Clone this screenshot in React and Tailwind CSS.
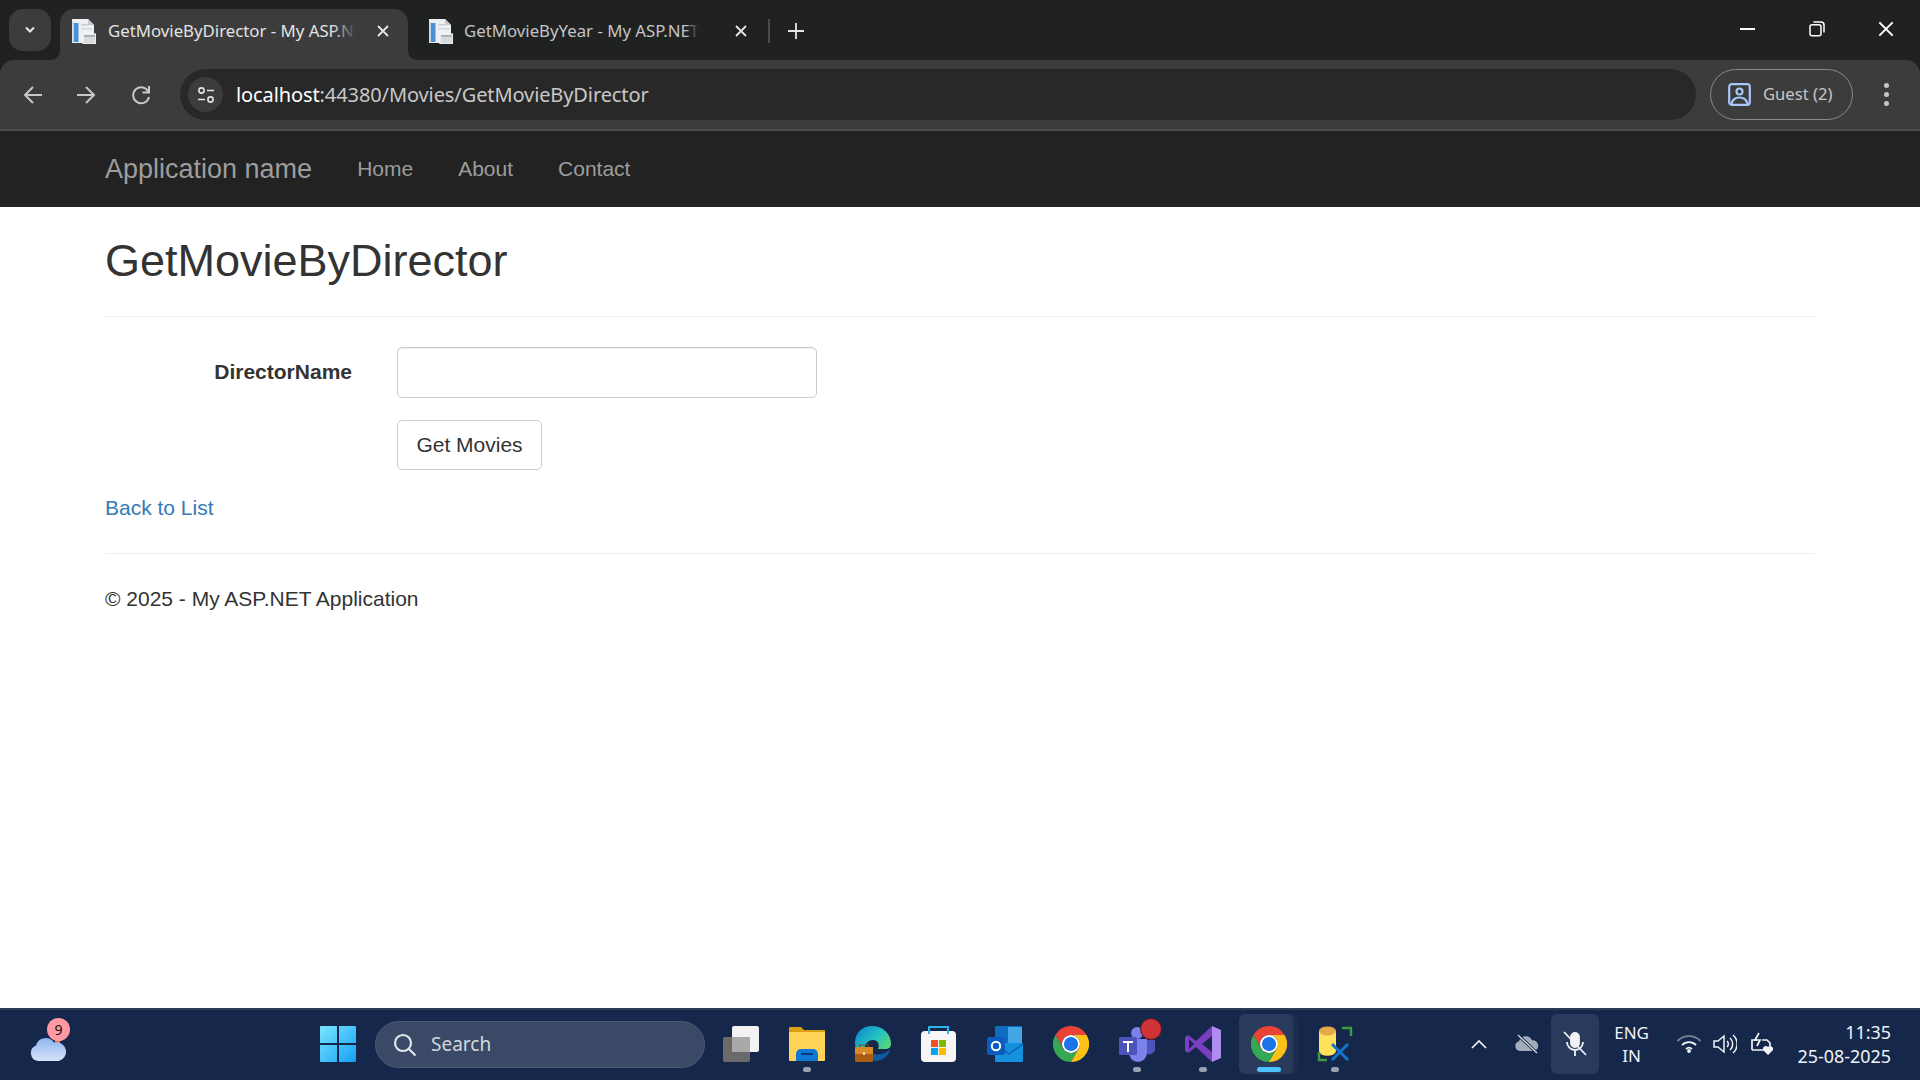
import React from "react";

const ui = "font-['Noto_Sans','Open_Sans',sans-serif]";
const web = "font-['Liberation_Sans',Arial,sans-serif]";

function DocIcon() {
  return (
    <svg width="24" height="26" viewBox="0 0 24 26" className="shrink-0">
      <path d="M0 1h16l6 6v18H0z" fill="#eef1f4" />
      <path d="M16 1l6 6h-6z" fill="#c4c9cf" />
      <rect x="1.5" y="5" width="5" height="19" fill="#4a90d4" />
      <rect x="0" y="3" width="1.5" height="22" fill="#cfe0f0" />
      <rect x="9" y="6" width="7" height="1.5" fill="#c9cdd2" />
      <rect x="9" y="10" width="11" height="1.5" fill="#d3d6da" />
      <rect x="11" y="16" width="13" height="10" fill="#d7dade" stroke="#f6f6f6" strokeWidth="1.2" />
      <rect x="12" y="17" width="11" height="2" fill="#aeb3ba" />
    </svg>
  );
}

function X({ size = 12, w = 1.8, color = "#e6e6e6" }) {
  return (
    <svg width={size} height={size} viewBox="0 0 12 12">
      <path d="M1 1l10 10M11 1L1 11" stroke={color} strokeWidth={w} fill="none" />
    </svg>
  );
}

function Corner({ flip }) {
  return (
    <svg width="10" height="10" viewBox="0 0 10 10" className={flip ? "absolute bottom-0 left-[-10px] -scale-x-100" : "absolute bottom-0 right-[-10px]"}>
      <path d="M0 0C0 6 4 10 10 10H0z" fill="#3c3c3c" />
    </svg>
  );
}

function TabStrip() {
  return (
    <div className={`${ui} h-[60px] bg-[#202222] flex items-start pt-[9px] pl-[9px] shrink-0`}>
      <div className="w-[42px] h-[42px] rounded-[14px] bg-[#3c3c3c] flex items-center justify-center">
        <svg width="12" height="8" viewBox="0 0 12 8"><path d="M2 1.5l4 4 4-4" stroke="#e8e8e8" strokeWidth="2" fill="none" /></svg>
      </div>
      <div className="relative ml-[9px] w-[348px] h-[51px] bg-[#3c3c3c] rounded-t-[14px] flex items-center pl-[12px] pb-[8px]">
        <Corner flip />
        <Corner />
        <DocIcon />
        <div className="relative ml-[12px] w-[248px] overflow-hidden whitespace-nowrap text-[16.8px] leading-[22px] text-[#e3e3e3]">
          GetMovieByDirector - My ASP.NET Application
          <div className="absolute right-0 top-0 h-full w-[24px] bg-gradient-to-r from-transparent to-[#3c3c3c]" />
        </div>
        <div className="ml-[21px]"><X /></div>
      </div>
      <div className="ml-[21px] h-[43px] flex items-center">
        <DocIcon />
        <div className="relative ml-[11px] w-[246px] overflow-hidden whitespace-nowrap text-[16.8px] leading-[22px] text-[#c2c4c4]">
          GetMovieByYear - My ASP.NET Application
          <div className="absolute right-0 top-0 h-full w-[24px] bg-gradient-to-r from-transparent via-[#202222] to-[#202222]" />
        </div>
        <div className="ml-[25px]"><X /></div>
        <div className="ml-[21px] w-[2px] h-[24px] bg-[#4a4c4c]" />
        <div className="ml-[18px]">
          <svg width="16" height="16" viewBox="0 0 16 16"><path d="M8 0v16M0 8h16" stroke="#e6e6e6" strokeWidth="1.8" /></svg>
        </div>
      </div>
      <div className="flex-1" />
      <div className="flex items-center h-[40px]">
        <div className="w-[69px] flex justify-center"><div className="w-[15px] h-[2px] bg-white" /></div>
        <div className="w-[69px] flex justify-center">
          <svg width="16" height="16" viewBox="0 0 16 16" fill="none" stroke="#fff" strokeWidth="1.5">
            <rect x="1" y="3.8" width="11" height="11" rx="2" />
            <path d="M4.5 1h7.5a3 3 0 0 1 3 3v7.5" />
          </svg>
        </div>
        <div className="w-[69px] flex justify-center"><X size={16} w={1.5} color="#fff" /></div>
      </div>
    </div>
  );
}

function Toolbar() {
  return (
    <div className="bg-[#202222] shrink-0">
      <div className={`${ui} h-[71px] bg-[#3c3c3c] rounded-t-[14px] border-b-[2px] border-[#4b4b4b] flex items-start pt-[9px] pl-[22px]`}>
        <div className="h-[51px] flex items-center">
          <svg width="22" height="22" viewBox="0 0 22 22" fill="none" stroke="#c7c7c7" strokeWidth="2"><path d="M20 11H3M11 3l-8 8 8 8" /></svg>
          <svg width="22" height="22" viewBox="0 0 22 22" fill="none" stroke="#c7c7c7" strokeWidth="2" className="ml-[31px]"><path d="M2 11h17M11 3l8 8-8 8" /></svg>
          <svg width="20" height="22" viewBox="0 0 20 22" fill="none" stroke="#c7c7c7" strokeWidth="2" className="ml-[34px]"><path d="M17.5 8A8 8 0 1 0 18 13" /><path d="M18 2v6.5h-6.5" /></svg>
        </div>
        <div className="ml-[29px] w-[1516px] h-[51px] rounded-full bg-[#282828] flex items-center pl-[8px]">
          <div className="w-[35px] h-[35px] rounded-full bg-[#3c3c3c] flex items-center justify-center">
            <svg width="18" height="18" viewBox="0 0 18 18" fill="none" stroke="#e3e3e3" strokeWidth="1.6">
              <circle cx="4.5" cy="4.5" r="2.6" /><path d="M10 4.5h7M1 13.5h7" /><circle cx="13.5" cy="13.5" r="2.6" />
            </svg>
          </div>
          <div className="ml-[13px] text-[20px] leading-[26px] whitespace-nowrap tracking-[-0.1px] text-[#c8c8c8]">
            <span className="text-white">localhost</span>:44380/Movies/GetMovieByDirector
          </div>
        </div>
        <div className="ml-[14px] w-[143px] h-[51px] rounded-full border-[1.5px] border-[#8a8a8a] flex items-center pl-[17px]">
          <svg width="23" height="23" viewBox="0 0 23 23" fill="none" stroke="#a8c7fa" strokeWidth="2.2">
            <rect x="1.2" y="1.2" width="20.6" height="20.6" rx="2.5" />
            <circle cx="11.5" cy="8.5" r="3" />
            <path d="M3.5 21c1-5 4-6.5 8-6.5s7 1.5 8 6.5" />
          </svg>
          <span className="ml-[12px] text-[16.6px] whitespace-nowrap text-[#c7c7c7]">Guest (2)</span>
        </div>
        <div className="h-[51px] ml-[31px] flex flex-col items-center justify-center gap-[4.5px]">
          <div className="w-[4.5px] h-[4.5px] rounded-full bg-[#c7c7c7]" />
          <div className="w-[4.5px] h-[4.5px] rounded-full bg-[#c7c7c7]" />
          <div className="w-[4.5px] h-[4.5px] rounded-full bg-[#c7c7c7]" />
        </div>
      </div>
    </div>
  );
}

function Chrome() {
  return (
    <svg width="36" height="36" viewBox="0 0 48 48">
      <path d="M44.8 12A24 24 0 0 0 3.2 12L13.6 30A12 12 0 0 1 24 12z" fill="#ea4335" />
      <path d="M3.2 12A24 24 0 0 0 24 48L34.4 30A12 12 0 0 1 13.6 30z" fill="#34a853" />
      <path d="M24 48A24 24 0 0 0 44.8 12H24A12 12 0 0 1 34.4 30z" fill="#fbc116" />
      <circle cx="24" cy="24" r="12" fill="#fff" />
      <circle cx="24" cy="24" r="9.4" fill="#1a73e8" />
    </svg>
  );
}

function Slot({ children, dot, active }) {
  return (
    <div className="relative w-[66px] h-[60px] flex items-center justify-center">
      {active && <div className="absolute left-[3px] top-0 w-[54px] h-[60px] rounded-[6px] bg-[#2a3a5c] shadow-[5px_0_0_#1f2e4e]" />}
      <div className="relative">{children}</div>
      {dot && <div className="absolute bottom-[2px] left-1/2 -ml-[4px] w-[8px] h-[5px] rounded-full bg-[#9aa2b1]" />}
      {active && <div className="absolute bottom-[2px] left-[21px] w-[24px] h-[5px] rounded-full bg-[#4cc2ff]" />}
    </div>
  );
}

function Taskbar() {
  return (
    <div className={`${ui} h-[72px] shrink-0 bg-[#15274a] border-t-[2px] border-[#2f3c58] flex items-start pt-[4px]`}>
      <div className="relative w-[320px] h-[60px] shrink-0 flex items-center pl-[30px]">
        <svg width="36" height="24" viewBox="0 0 36 24" className="mt-[10px]">
          <defs>
            <linearGradient id="c1" x1="0" y1="0" x2="0" y2="1"><stop offset="0" stopColor="#8fb4ee" /><stop offset="1" stopColor="#d7e4fa" /></linearGradient>
          </defs>
          <rect x="25" y="0" width="5" height="6" fill="#e8752a" />
          <path d="M8 24a8 8 0 0 1-2-15.4 10 10 0 0 1 18-3A8.5 8.5 0 0 1 29 24z" fill="url(#c1)" />
        </svg>
        <div className="absolute left-[47px] top-[4px] w-[23px] h-[23px] rounded-full bg-[#ff9aa2] text-[#111] text-[14px] leading-[23px] text-center">9</div>
      </div>
      <div className="w-[55px] h-[60px] shrink-0 flex items-center">
        <svg width="36" height="36" viewBox="0 0 36 36">
          <defs>
            <linearGradient id="w1" x1="0" y1="0" x2="1" y2="1"><stop offset="0" stopColor="#7ae6ff" /><stop offset="1" stopColor="#14a0f5" /></linearGradient>
          </defs>
          <path d="M1 0h16v17H0V1a1 1 0 0 1 1-1zM19 0h16a1 1 0 0 1 1 1v16H19zM0 19h17v17H1a1 1 0 0 1-1-1zM19 19h17v16a1 1 0 0 1-1 1H19z" fill="url(#w1)" />
        </svg>
      </div>
      <div className="w-[330px] h-[47px] mt-[7px] shrink-0 rounded-full bg-[#3a4966] border border-[#4a5874] flex items-center pl-[17px]">
        <svg width="24" height="24" viewBox="0 0 24 24" fill="none" stroke="#e3e6ec" strokeWidth="2.2">
          <circle cx="10" cy="10" r="8" /><path d="M16 16l6.5 6.5" />
        </svg>
        <span className="ml-[14px] text-[19px] text-[#d3d7df]">Search</span>
      </div>
      <div className="ml-[3px] flex">
        <Slot>
          <svg width="37" height="36" viewBox="0 0 37 36">
            <rect x="0" y="11" width="27" height="25" rx="2" fill="#6a6a6a" />
            <rect x="9" y="0" width="27" height="26" rx="2" fill="#f2f2f2" />
            <rect x="9" y="11" width="18" height="15" fill="#a9a9a9" />
          </svg>
        </Slot>
        <Slot dot>
          <svg width="36" height="36" viewBox="0 0 36 36">
            <path d="M0 2a1 1 0 0 1 1-1h11l3 3h21v4H0z" fill="#d9a00f" />
            <path d="M0 6h36v28a1 1 0 0 1-1 1H1a1 1 0 0 1-1-1z" fill="#ffd258" />
            <path d="M7 35v-7a5 5 0 0 1 5-5h12a5 5 0 0 1 5 5v7z" fill="#0f78d4" />
            <rect x="12" y="27" width="12" height="2" fill="#053f78" />
          </svg>
        </Slot>
        <Slot>
          <svg width="36" height="36" viewBox="0 0 36 36">
            <defs>
              <linearGradient id="e1" x1="0" y1="0" x2="1" y2="0.8"><stop offset="0" stopColor="#0c7fd0" /><stop offset="0.5" stopColor="#22c1c3" /><stop offset="1" stopColor="#6fdc5c" /></linearGradient>
            </defs>
            <path d="M0 17C0 7 7 0 17 0c10 0 19 7 19 18 0 3-2 5-6 5h-7c2-4 0-9-5-9-6 0-10 6-8 13 1 4 4 8 7 8C8 35 0 28 0 17z" fill="url(#e1)" />
            <path d="M13 24c3 5 13 7 23-1-3 8-10 12-15 12-4 0-8-4-8-11z" fill="#125a9e" />
            <rect x="0" y="21" width="18" height="15" rx="1" fill="#a95c12" />
            <rect x="0" y="21" width="18" height="7" fill="#d88a2a" />
            <path d="M5 21v-2h8v2" stroke="#7a4a10" strokeWidth="1.2" fill="none" />
            <rect x="8" y="26" width="2" height="3" fill="#ffe0a0" />
          </svg>
        </Slot>
        <Slot>
          <svg width="36" height="36" viewBox="0 0 36 36">
            <rect x="0" y="5" width="35" height="31" rx="4" fill="#f6f6f6" />
            <path d="M8 8V1h19v7" stroke="#2ab5ea" strokeWidth="2" fill="none" />
            <rect x="10" y="14" width="7" height="7" fill="#f25022" />
            <rect x="18" y="14" width="7" height="7" fill="#7fba00" />
            <rect x="10" y="22" width="7" height="7" fill="#00a4ef" />
            <rect x="18" y="22" width="7" height="7" fill="#ffb900" />
          </svg>
        </Slot>
        <Slot>
          <svg width="36" height="36" viewBox="0 0 36 36">
            <rect x="8" y="0" width="27" height="18" rx="1" fill="#0f6cbd" />
            <rect x="21" y="1" width="14" height="16" fill="#40a6e6" />
            <path d="M8 17h28v18a1 1 0 0 1-1 1H9a1 1 0 0 1-1-1z" fill="#1490df" />
            <path d="M8 18l14 10 14-10" stroke="#0a5ea8" strokeWidth="1.2" fill="none" />
            <rect x="0" y="11" width="18" height="18" rx="2" fill="#0b5cc0" />
            <circle cx="9" cy="20" r="4.2" fill="none" stroke="#fff" strokeWidth="2" />
          </svg>
        </Slot>
        <Slot><Chrome /></Slot>
        <Slot dot>
          <div className="relative w-[36px] h-[36px]">
            <svg width="36" height="36" viewBox="0 0 36 36">
              <circle cx="18" cy="7" r="6" fill="#7b83eb" />
              <path d="M10 13h18v14a9 9 0 0 1-18 0z" fill="#7b83eb" />
              <path d="M28 14h8v10a6 6 0 0 1-8 4z" fill="#4b53bc" />
              <rect x="0" y="11" width="18" height="18" rx="1.5" fill="#4b53bc" />
              <path d="M4 15h10v2h-4v9H8v-9H4z" fill="#fff" />
            </svg>
            <div className="absolute top-[-8px] right-[-7px] w-[22px] h-[22px] rounded-full bg-[#cf3338] border border-[#5a1a22]" />
          </div>
        </Slot>
        <Slot dot>
          <svg width="36" height="36" viewBox="0 0 36 36">
            <path d="M27 0L11 15 3 9 0 11v14l3 2 8-6 16 15V26l-10-8 10-8z" fill="#7a3fbf" />
            <path d="M27 0l9 4v28l-9 4z" fill="#b18cf0" />
            <path d="M4 13v10l5-5z" fill="#15274a" />
          </svg>
        </Slot>
        <Slot active><Chrome /></Slot>
        <Slot dot>
          <svg width="36" height="36" viewBox="0 0 36 36">
            <path d="M2 6a8 4.5 0 0 1 17 0v19a8 4.5 0 0 1-17 0z" fill="#ffe15a" />
            <ellipse cx="10.5" cy="5" rx="8.5" ry="4.5" fill="#e8a84a" />
            <path d="M25 2h9v8M2 26v8h8" stroke="#3d9a3e" strokeWidth="2.4" fill="none" />
            <path d="M15 18l16 16M31 18L15 34" stroke="#1177cc" strokeWidth="3" />
          </svg>
        </Slot>
      </div>
      <div className="flex-1" />
      <div className="flex items-center h-[60px] text-[#f1f3f6]">
        <svg width="16" height="10" viewBox="0 0 16 10" fill="none" stroke="#f1f3f6" strokeWidth="1.7"><path d="M1 9l7-7 7 7" /></svg>
        <svg width="24" height="20" viewBox="0 0 24 20" className="ml-[28px]">
          <path d="M5 17a5 5 0 0 1-1-9.8 7 7 0 0 1 13-1 5.5 5.5 0 0 1 2 10.8z" fill="#a4acba" />
          <path d="M3 1l19 18" stroke="#15274a" strokeWidth="3" /><path d="M3 1l19 18" stroke="#dfe3ea" strokeWidth="1.2" />
        </svg>
        <div className="ml-[12px] w-[48px] h-[60px] rounded-[6px] bg-[#2a3a5c] flex items-center justify-center">
          <svg width="24" height="26" viewBox="0 0 24 26" fill="none" stroke="#f1f3f6" strokeWidth="1.8">
            <rect x="8" y="2" width="8" height="14" rx="4" fill="#f1f3f6" />
            <path d="M4 11a8 8 0 0 0 16 0M12 19v6M1 1l22 23" />
          </svg>
        </div>
        <div className="w-[66px] text-center text-[17px] leading-[23px]">ENG<br />IN</div>
        <svg width="26" height="18" viewBox="0 0 26 18" fill="none" stroke="#f1f3f6" strokeWidth="1.8" className="ml-[11px]">
          <path d="M1.5 6a16 16 0 0 1 23 0" stroke="#7a8498" /><path d="M6 10a10 10 0 0 1 14 0M10 14a4.5 4.5 0 0 1 6 0" /><circle cx="13" cy="16" r="1" fill="#f1f3f6" />
        </svg>
        <svg width="24" height="22" viewBox="0 0 24 22" fill="none" stroke="#f1f3f6" strokeWidth="1.5" className="ml-[11px]">
          <path d="M1 8v6h4l6 5V3L5 8zM14 8a4 4 0 0 1 0 6M17 5a8 8 0 0 1 0 12M20 2a12 12 0 0 1 0 18" />
        </svg>
        <svg width="25" height="24" viewBox="0 0 25 24" fill="none" stroke="#f1f3f6" strokeWidth="1.7" className="ml-[13px]">
          <path d="M2 18V8h5M12 8h5l3 3v3M2 18h12" /><path d="M9 1L5 8h5l-3 6" /><path d="M18 23l-5-5a3 3 0 0 1 5-3 3 3 0 0 1 5 3z" fill="#f1f3f6" stroke="none" />
        </svg>
        <div className="ml-[23px] mr-[29px] text-right text-[17.9px] leading-[24px] whitespace-nowrap">11:35<br />25-08-2025</div>
      </div>
    </div>
  );
}

export default function App() {
  return (
    <div className="h-screen flex flex-col overflow-hidden bg-white">
      <TabStrip />
      <Toolbar />
      <nav className={`${web} h-[76px] shrink-0 bg-[#222] flex items-center pl-[105px] text-[#9d9d9d]`}>
        <a className="text-[27px]">Application name</a>
        <a className="ml-[45px] text-[21px]">Home</a>
        <a className="ml-[45px] text-[21px]">About</a>
        <a className="ml-[45px] text-[21px]">Contact</a>
      </nav>
      <main className={`${web} flex-1 px-[105px] text-[#333] text-[21px] leading-[28px]`}>
        <h2 className="text-[45px] leading-[50px] pt-[29px] pb-[30px] border-b border-[#eee]">GetMovieByDirector</h2>
        <div className="mt-[30px] flex items-center h-[51px]">
          <label className="w-[247px] text-right font-bold -mt-[2px]">DirectorName</label>
          <input className="ml-[45px] w-[420px] h-[51px] rounded-[5px] border border-[#ccc] bg-white shadow-[inset_0_1px_1px_rgba(0,0,0,0.075)]" />
        </div>
        <div className="mt-[22px] pl-[292px]">
          <button className="w-[145px] h-[50px] rounded-[5px] border border-[#ccc] bg-white text-[#333]">Get Movies</button>
        </div>
        <a className="block mt-[24px] text-[#337ab7]">Back to List</a>
        <div className="mt-[31px] border-t border-[#eee]" />
        <p className="mt-[31px]">© 2025 - My ASP.NET Application</p>
      </main>
      <Taskbar />
    </div>
  );
}
